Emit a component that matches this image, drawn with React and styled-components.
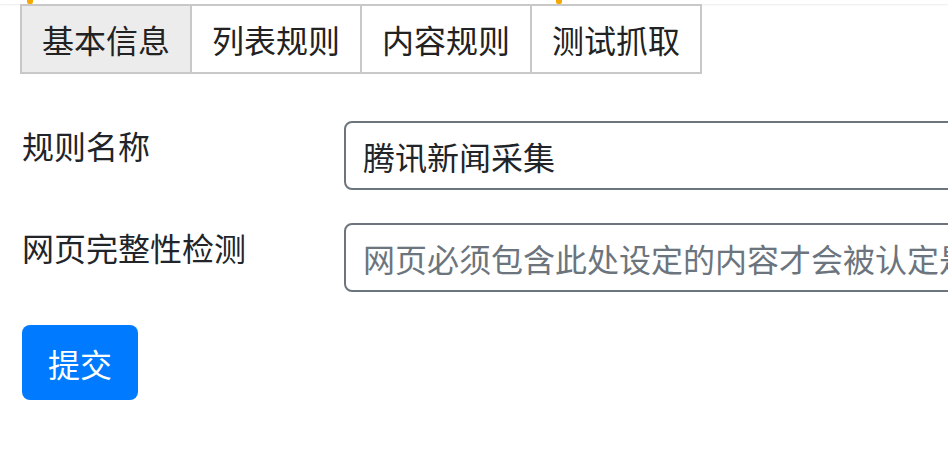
import React from "react";
import styled, { createGlobalStyle } from "styled-components";

const GlobalStyle = createGlobalStyle`
    html, body {
        margin: 0;
        padding: 0;
        background: #fff;
        overflow: hidden;
    }
    body {
        font-family: "Noto Sans CJK SC", "Noto Sans", sans-serif;
        color: #212529;
    }
`;

const TopEdge = styled.div`
    height: 4px;
    display: flex;
    box-shadow: 0 1px 2px rgba(0, 0, 0, 0.08);
`;

const Marker = styled.span`
    width: 6px;
    height: 4px;
    margin-left: ${(p) => p.offset}px;
    background: #f5a800;
    border-radius: 0 0 2px 2px;
`;

const Page = styled.div`
    padding: 0 0 0 20px;
    overflow: hidden;
`;

const TabBar = styled.div`
    display: inline-flex;
    border: 2px solid #c8c8c8;
    background: #fff;
`;

const Tab = styled.div`
    width: 168px;
    height: 66px;
    display: flex;
    align-items: center;
    justify-content: center;
    font-size: 32px;
    color: #222;
    background: ${(p) => (p.active ? "#ececec" : "#fff")};
    & + & {
        border-left: 2px solid #c8c8c8;
    }
`;

const Form = styled.form`
    padding: 47px 0 0 2px;
`;

const Row = styled.div`
    display: grid;
    grid-template-columns: 322px 700px;
    margin-bottom: 33px;
`;

const Label = styled.label`
    font-size: 32px;
    line-height: 48px;
    color: #212529;
`;

const Input = styled.input`
    box-sizing: border-box;
    height: 69px;
    width: 100%;
    padding: 0 17px;
    border: 2px solid #6c757d;
    border-radius: 8px;
    font-family: inherit;
    font-size: 32px;
    color: #212529;
    background: #fff;
    outline: none;
    &::placeholder {
        color: #6c757d;
        opacity: 1;
    }
`;

const Button = styled.button`
    width: 116px;
    height: 75px;
    border: none;
    border-radius: 8px;
    background: #007bff;
    color: #fff;
    font-family: inherit;
    font-size: 32px;
    cursor: pointer;
`;

const tabs = ["基本信息", "列表规则", "内容规则", "测试抓取"];

export default function App() {
    return (
        <>
            <GlobalStyle />
            <TopEdge>
                <Marker offset={27} />
                <Marker offset={523} />
            </TopEdge>
            <Page>
                <TabBar>
                    {tabs.map((t, i) => (
                        <Tab key={t} active={i === 0}>{t}</Tab>
                    ))}
                </TabBar>
                <Form onSubmit={(e) => e.preventDefault()}>
                    <Row>
                        <Label>规则名称</Label>
                        <Input defaultValue="腾讯新闻采集" />
                    </Row>
                    <Row>
                        <Label>网页完整性检测</Label>
                        <Input placeholder="网页必须包含此处设定的内容才会被认定是完整的网页" />
                    </Row>
                    <Button type="submit">提交</Button>
                </Form>
            </Page>
        </>
    );
}
